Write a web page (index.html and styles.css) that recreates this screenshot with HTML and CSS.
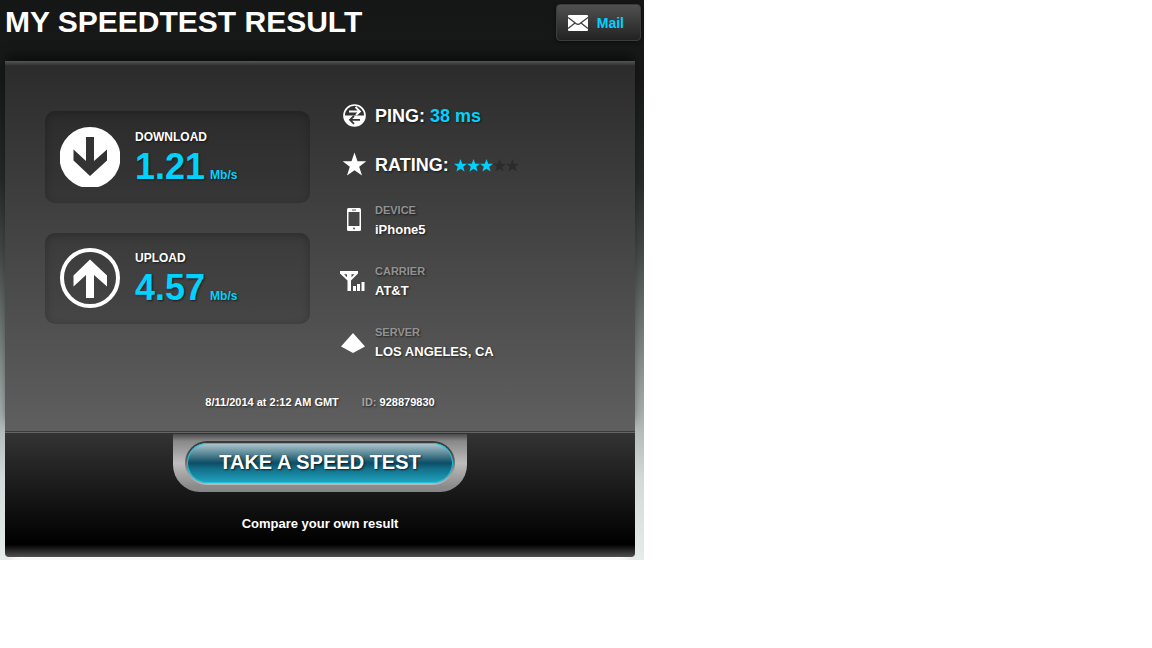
FILE: index.html
```html
<!DOCTYPE html>
<html lang="en">
<head>
<meta charset="utf-8">
<title>My Speedtest Result</title>
<link rel="stylesheet" href="styles.css">
</head>
<body>
<div class="widget">
  <header class="header">
    <h1 class="title">MY SPEEDTEST RESULT</h1>
    <button class="mail" type="button">
      <svg class="mail-icon" viewBox="0 0 20 16" aria-hidden="true"><rect width="20" height="16" rx="1" fill="#fff"/><path d="M0 2.500 8 8.600Q10 10 12 8.600L20 2.500M0 13.500 7 8M20 13.500 13 8" fill="none" stroke="#3c3c3c" stroke-width="1.300"/></svg>
      Mail
    </button>
  </header>
  <main class="card">
    <div class="columns">
      <div class="speeds">
        <section class="speed">
          <svg class="speed-icon" viewBox="0 0 60 60" aria-hidden="true"><circle cx="30" cy="30.500" r="30.500" fill="#fff"/><path d="M26 10h8v24L47 22.500V33.500L30 49 13.500 33.500V22.500L26 34Z" fill="#333"/></svg>
          <div>
            <h2 class="speed-label">DOWNLOAD</h2>
            <p class="speed-value">1.21 <span class="unit">Mb/s</span></p>
          </div>
        </section>
        <section class="speed">
          <svg class="speed-icon" viewBox="0 0 60 60" aria-hidden="true"><circle cx="30" cy="30" r="28" fill="none" stroke="#fff" stroke-width="4"/><path d="M26 50h8V27L47 38.500V27.500L30 11.500 13.500 27.500V38.500L26 27Z" fill="#fff"/></svg>
          <div>
            <h2 class="speed-label">UPLOAD</h2>
            <p class="speed-value">4.57 <span class="unit">Mb/s</span></p>
          </div>
        </section>
      </div>
      <div class="details">
        <div class="row">
          <svg class="icon" viewBox="0 0 28 28" aria-hidden="true"><circle cx="14.500" cy="13.500" r="10.500" fill="none" stroke="#fff" stroke-width="1.700"/><path d="M4 13.500h21a10.500 10.500 0 0 1-21 0Z" fill="#fff"/><path d="M9 9.500h10.500M15.500 5l4.500 4.500-4 3.500" fill="none" stroke="#fff" stroke-width="1.800"/><path d="M20 17.800H10M14 14l-4 3.800 4 4" fill="none" stroke="#333" stroke-width="1.800"/></svg>
          <p class="stat">PING: <span class="cyan">38 ms</span></p>
        </div>
        <div class="row">
          <svg class="icon" viewBox="0 0 28 28" aria-hidden="true"><path d="M14.500 1.500 17.500 10.200H26.300L19.200 15.700 22 24.500 14.500 19.200 7 24.500 9.800 15.700 2.700 10.200H11.500Z" fill="#fff"/></svg>
          <p class="stat">RATING:
            <svg class="stars" viewBox="0 0 65 13" role="img" aria-label="3 of 5 stars">
              <defs><path id="star" d="M6.500 0 8.200 4.700H13L9.200 7.800 10.600 12.600 6.500 9.800 2.400 12.600 3.800 7.800 0 4.700H4.800Z"/></defs>
              <g fill="#00d2ff"><use href="#star"/><use href="#star" x="13"/><use href="#star" x="26"/></g>
              <g fill="#2b2b2b"><use href="#star" x="39"/><use href="#star" x="52"/></g>
            </svg>
          </p>
        </div>
        <dl class="facts">
          <div class="row">
            <svg class="icon" viewBox="0 0 28 28" aria-hidden="true"><rect x="7" y="2" width="14" height="23" rx="1.500" fill="#fff"/><rect x="8.500" y="6" width="11" height="14" fill="#474747"/><path d="M12 4h4" stroke="#555" stroke-width="1"/><circle cx="14" cy="22.600" r="1" fill="#555"/></svg>
            <div><dt>DEVICE</dt><dd>iPhone5</dd></div>
          </div>
          <div class="row">
            <svg class="icon" viewBox="0 0 28 28" aria-hidden="true"><path d="M0 4h18v2.500L11 13.500V24H7.500V13.500L0 6.500Z" fill="#fff"/><path d="M4 7.200h3v3ZM14.500 7.200h-3v3Z" fill="#4e4e4e"/><path d="M13 19h3v5h-3ZM17 17h3v7h-3ZM21.500 15h3v9h-3Z" fill="#fff"/></svg>
            <div><dt>CARRIER</dt><dd>AT&amp;T</dd></div>
          </div>
          <div class="row">
            <svg class="icon" viewBox="0 0 28 28" aria-hidden="true"><path d="M13 5 25 18.500 13 25 1 18.500Z" fill="#fff"/></svg>
            <div><dt>SERVER</dt><dd>LOS ANGELES, CA</dd></div>
          </div>
        </dl>
      </div>
    </div>
    <p class="meta"><time>8/11/2014 at 2:12 AM GMT</time><span><span class="meta-label">ID:</span> 928879830</span></p>
  </main>
  <footer class="footer">
    <div class="tray"><button class="cta" type="button">TAKE A SPEED TEST</button></div>
    <p class="compare">Compare your own result</p>
  </footer>
</div>
</body>
</html>
```
FILE: styles.css
```css
* { box-sizing: border-box; }
body { margin: 0; background: #fff; font-family: "Liberation Sans", Arial, sans-serif; font-weight: bold; color: #fff; }
h1, h2, p, dl, dd { margin: 0; }
svg { display: block; flex: none; }
.widget {
  max-width: 644px;
  padding: 0 9px 3px 5px;
  background: linear-gradient(#151716 0, #171a19 80px, #272b2a 180px, #454a49 250px, #737a78 330px, #a0a7a6 400px, #d3dad9 480px, #e5ecea 560px);
}
.header { display: flex; justify-content: space-between; align-items: flex-start; margin-right: -6px; padding: 4px 0 20px; }
.title { font-size: 30px; line-height: 36px; }
.mail {
  display: flex; align-items: center; gap: 9px; height: 37px; padding: 0 16px 0 11px;
  border: 1px solid #3c3c3c; border-radius: 4px;
  background: linear-gradient(#505050, #222);
  box-shadow: 0 1px 4px rgba(0, 0, 0, .5);
  color: #00d2ff; font: bold 14px "Liberation Sans", Arial, sans-serif;
}
.mail-icon { width: 20px; height: 16px; }
.card {
  padding: 43px 0 19px;
  background: linear-gradient(#555, rgba(43, 43, 43, 0)) top / 100% 5px no-repeat, linear-gradient(#2b2b2b, #5f5f5f);
  box-shadow: 0 -8px 10px -2px rgba(0, 0, 0, .5);
  text-shadow: 1px 1px 2px rgba(0, 0, 0, .6);
}
.columns { display: grid; grid-template-columns: minmax(0, 265px) minmax(0, 1fr); gap: 30px; padding: 0 40px; }
.speeds { display: flex; flex-direction: column; gap: 30px; padding-top: 7px; }
.speed {
  display: flex; align-items: flex-start; gap: 15px; padding: 16px 15px;
  border-radius: 10px; background: rgba(0, 0, 0, .12);
  box-shadow: inset 0 2px 9px rgba(0, 0, 0, .24);
}
.speed + .speed { padding: 15px 15px 16px; }
.speed-icon { width: 60px; height: 60px; }
.speed-label { font-size: 12px; line-height: 20px; }
.speed-value { display: flex; align-items: baseline; gap: 5px; height: 40px; color: #00d2ff; font-size: 36px; line-height: 40px; white-space: nowrap; }
.unit { font-size: 12px; line-height: 20px; }
.row { display: flex; gap: 7px; }
.icon { width: 28px; height: 28px; margin-top: -2px; }
.details { display: flex; flex-direction: column; gap: 25px; }
.details > .row { height: 24px; }
.stat { display: flex; align-items: center; gap: 5px; font-size: 18px; line-height: 24px; }
.cyan { color: #00d2ff; }
.stars { width: 65px; height: 13px; }
.facts { display: grid; gap: 21px; margin-top: -2px; }
.facts .icon { margin-top: 6px; }
dt { color: #929292; font-size: 11px; line-height: 20px; }
dd { font-size: 13px; line-height: 20px; }
.meta { display: flex; justify-content: center; gap: 23px; margin-top: 30px; font-size: 11px; line-height: 20px; }
.meta-label { color: #a5a5a5; }
.footer {
  display: flex; flex-direction: column; align-items: center; padding: 2px 0 23px;
  border-top: 1px solid #3a3a3a; border-radius: 0 0 4px 4px;
  background: linear-gradient(#666, #666) top / 100% 1px no-repeat, linear-gradient(#343434, #000 90%, #505050);
  box-shadow: 0 14px 8px -8px rgba(255, 255, 255, .8);
}
.tray {
  padding: 7px 12px; border-radius: 0 0 27px 27px;
  background: linear-gradient(#4a4a4a, #888 7px, #bdbdbd 50%, #8c8c8c 90%, #858585);
}
.cta {
  display: block; height: 44px; padding: 0 32px 2px;
  border: 2px solid transparent; border-radius: 22px;
  background:
    linear-gradient(#b2c9d0, #568595 28%, #0c4d66 50%, #13708a 65%, #20a5c2) padding-box,
    linear-gradient(#3a3a3a, #4a4a4a 30%, #999 70%, #b8b8b8) border-box;
  box-shadow: inset 0 0 0 1px #1fc2dc;
  color: #fff; font: bold 20px "Liberation Sans", Arial, sans-serif;
  text-shadow: 1px 1px 2px rgba(0, 0, 0, .7);
}
.compare { margin-top: 22px; font-size: 13px; line-height: 20px; }
```
